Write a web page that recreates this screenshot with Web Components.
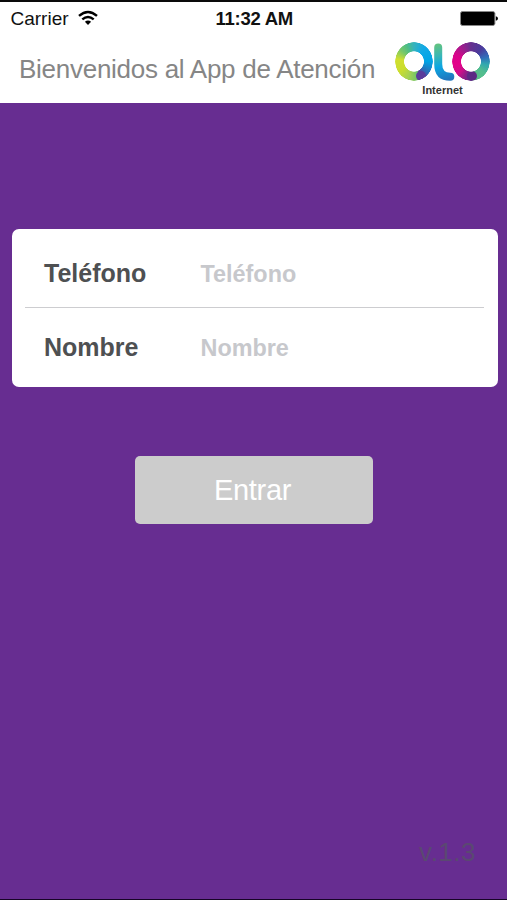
<!DOCTYPE html>
<html lang="es">
<head>
<meta charset="utf-8">
<title>OLO Internet</title>
<style>
html,body{margin:0;height:100%}
body{font-family:"Liberation Sans",Arial,sans-serif;background:#672d91;overflow:hidden}
</style>
</head>
<body>
<olo-app></olo-app>
<script>
function define(name, css, html) {
  const t = document.createElement('template');
  t.innerHTML = '<style>*{box-sizing:border-box}' + css + '</style>' + html;
  customElements.define(name, class extends HTMLElement {
    constructor() {
      super();
      this.attachShadow({ mode: 'open' }).append(t.content.cloneNode(true));
    }
  });
}

define('status-bar', `
  :host{display:grid;grid-template-columns:1fr auto 1fr;align-items:center;height:32px;padding:0 9px 0 10.5px;color:#111;font-size:19px;line-height:32px}
  .left{display:flex;align-items:center;gap:9px}
  span{padding-top:1px}
  .time{font-size:18.5px;font-weight:bold;letter-spacing:-.25px}
  .right{display:flex;justify-content:flex-end;margin-top:-1px}
  .left svg{margin-top:-2px}
  svg{display:block}
`, `
  <div class="left"><span>Carrier</span>
    <svg width="20" height="16" viewBox="0 0 20 16" fill="none" stroke="#000" stroke-width="2.4">
      <path d="M1 5.9Q10-1.9 19 5.9"/><path d="M4.3 9.4Q10 4.6 15.7 9.4"/>
      <path d="M6.9 11.8Q10 9.4 13.1 11.8L10 15Z" fill="#000" stroke="none"/>
    </svg></div>
  <span class="time">11:32 AM</span>
  <div class="right"><svg width="38" height="15" viewBox="0 0 38 15">
    <rect x=".5" y=".5" width="34.4" height="14" rx="2" fill="#000" stroke="#888" stroke-width="1"/>
    <path d="M35.8 5.2Q38 5.8 38 7.5T35.8 9.8Z" fill="#000"/></svg></div>
`);

define('olo-ring', `
  :host{display:block;position:relative;width:38px;height:39px;border-radius:50%;background:var(--ring);
    -webkit-mask:radial-gradient(ellipse closest-side,transparent 50.5%,#000 53.5%,#000 98%,transparent 100%);
    mask:radial-gradient(ellipse closest-side,transparent 50.5%,#000 53.5%,#000 98%,transparent 100%)}
  i{position:absolute;width:10px;height:10px;border-radius:50%;left:var(--cap-x);bottom:0;background:var(--cap)}
`, '<i></i>');

define('olo-logo', `
  :host{display:flex;flex-direction:column;align-items:center;width:95px}
  .mark{display:flex}
  .a{--cap:#5a3c9b;--cap-x:21px;--ring:conic-gradient(#35b3bd 0deg,#12a9e6 35deg,#00a4e6 90deg,#2476bd 125deg,#5a3c9b 154deg,#5a3c9b 157deg,#5fc070 158deg,#a5d152 200deg,#cbdd2e 235deg,#d0df30 278deg,#78c868 310deg,#4fbd84 335deg,#35b3bd 360deg)}
  .b{--cap:#5c2b84;--cap-x:14.5px;--ring:conic-gradient(#65308f 0deg,#4b3b9c 40deg,#3170ba 75deg,#30a7b0 100deg,#51bd90 130deg,#5ec084 177deg,#5c2b84 178deg,#7c2388 195deg,#cc108a 225deg,#e4008a 260deg,#d8058b 295deg,#9b1f8d 330deg,#65308f 360deg)}
  .l{margin:0 -3px 0 1px}
  .name{font-size:11px;line-height:14px;font-weight:bold;color:#333;margin-top:2px;margin-right:0}
`, `
  <div class="mark"><olo-ring class="a"></olo-ring>
    <svg class="l" width="21" height="39" viewBox="0 0 21 39"><defs><linearGradient id="g" gradientUnits="userSpaceOnUse" x1="3" y1="3" x2="12" y2="38"><stop stop-color="#60c283"/><stop offset=".3" stop-color="#3ab7b5"/><stop offset=".6" stop-color="#0ba6e2"/><stop offset="1" stop-color="#2176bd"/></linearGradient></defs>
      <path d="M4.2 5.5V22Q4.2 34.8 16.3 34.8" fill="none" stroke="url(#g)" stroke-width="8" stroke-linecap="round"/></svg>
    <olo-ring class="b"></olo-ring></div>
  <span class="name">Internet</span>
`);

define('app-header', `
  :host{display:flex;justify-content:space-between;height:69px;padding:8px 17px 0 19px}
  .t{font-size:26px;line-height:36px;letter-spacing:-.27px;color:#868686;white-space:nowrap;margin-top:9px}
`, `<span class="t"><slot></slot></span><olo-logo></olo-logo>`);

define('form-row', `
  :host{display:grid;grid-template-columns:156.5px 1fr;align-items:baseline;height:71px;padding:0 19px;line-height:74px;font-weight:bold;font-size:25px;color:#4e5052}
  .p{font-size:23.4px;color:#c7c8cc}
`, `<slot></slot><span class="p"><slot name="hint"></slot></span>`);

define('login-card', `
  :host{display:block;height:158px;border-radius:7px;background:#fff;padding:7px 14px 0 13px}
  hr{margin:0 0 2px;border:0;height:1px;background:#cdcdd0}
`, `<form-row>Teléfono<span slot="hint">Teléfono</span></form-row><hr><form-row>Nombre<span slot="hint">Nombre</span></form-row>`);

define('enter-button', `
  :host{display:block;width:238px;height:68px;border-radius:5px;background:#ccc;color:#fff;font-size:29px;letter-spacing:-.3px;line-height:68px;text-align:center;padding-right:3px;box-sizing:border-box}
`, `<slot></slot>`);

define('olo-app', `
  :host{display:flex;flex-direction:column;height:900px;background:#672d91;border-top:2px solid #0a0a0a;border-bottom:1px solid #170426;box-sizing:border-box}
  .top{background:#fff;height:101px;flex:none}
  login-card{margin:126px 9.5px 0 12px;box-sizing:border-box}
  enter-button{margin:69px 0 0 135px}
  .v{margin:auto 31px 29px auto;font-size:26px;line-height:36px;letter-spacing:.5px;color:#5a4872}
`, `
  <div class="top"><status-bar></status-bar><app-header>Bienvenidos al App de Atención</app-header></div>
  <login-card></login-card>
  <enter-button>Entrar</enter-button>
  <span class="v">v.1.3</span>
`);
</script>
</body>
</html>
